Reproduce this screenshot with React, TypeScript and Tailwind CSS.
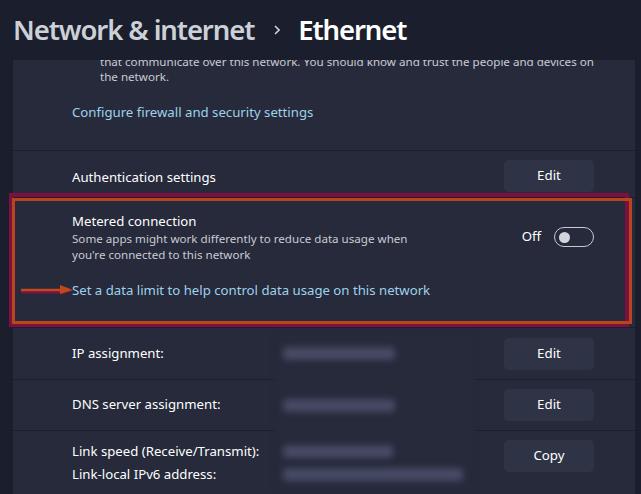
import React from "react";

const font = { fontFamily: '"Noto Sans", "Open Sans", sans-serif' };

function ActionButton({ label }: { label: string }) {
  return (
    <button className="w-[90px] h-[32px] rounded-[5px] bg-[#2f3346] text-[13.3px] text-white">
      {label}
    </button>
  );
}

function Blob({ w, className = "" }: { w: string; className?: string }) {
  return <div className={`h-[13px] rounded-sm bg-[#464a64] blur-[3px] ${w} ${className}`} />;
}

export default function App() {
  return (
    <div className="w-[641px] h-[494px] bg-[#1b1f2d] overflow-hidden relative" style={font}>
      {/* Header */}
      <div className="h-[60px] flex items-center pl-[13px] pb-[1px]">
        <span className="text-[27.5px] font-semibold text-[#cdd0d7] tracking-[-1.1px]">Network &amp; internet</span>
        <svg className="ml-[20px] mr-[18px]" width="6" height="10" viewBox="0 0 6 10">
          <path d="M1 1 L5 5 L1 9" fill="none" stroke="#cdd0d7" strokeWidth="1.6" />
        </svg>
        <span className="text-[27.5px] font-semibold text-white tracking-[-1.1px]">Ethernet</span>
      </div>

      {/* Card column */}
      <div className="ml-[13px] w-[622px] flex flex-col gap-[1px]">
        {/* Firewall section (scrolled) */}
        <div className="h-[90px] bg-[#262a3b] overflow-hidden">
          <div className="mt-[-6px] pl-[87px] text-[11.6px] leading-[15px] text-[#c9cbd3]">
            <div>that communicate over this network. You should know and trust the people and devices on</div>
            <div>the network.</div>
          </div>
          <div className="pl-[59px] mt-[19px] text-[13.2px] text-[#9fd2ea]">
            Configure firewall and security settings
          </div>
        </div>

        {/* Authentication */}
        <div className="h-[46px] bg-[#262a3b] flex items-center justify-between pl-[59px] pr-[41px] pt-[4px]">
          <span className="text-[13.2px] text-white mt-[3px]">Authentication settings</span>
          <ActionButton label="Edit" />
        </div>

        {/* Metered connection */}
        <div className="h-[129px] bg-[#262a3b] pl-[59px] pr-[41px] pt-[13px]">
          <div className="flex justify-between items-start">
            <div>
              <div className="text-[13.2px] text-white leading-[20px]">Metered connection</div>
              <div className="text-[11.6px] leading-[16px] text-[#c9cbd3] w-[345px]">
                Some apps might work differently to reduce data usage when you're connected to this network
              </div>
            </div>
            <div className="flex items-center gap-[13px] mt-[16px]">
              <span className="text-[13.2px] text-white">Off</span>
              <div className="w-[40px] h-[20px] rounded-full border border-[#c8cad2] flex items-center pl-[4px]">
                <div className="w-[11px] h-[11px] rounded-full bg-[#d3d5dc]" />
              </div>
            </div>
          </div>
          <div className="mt-[18px] text-[13.2px] text-[#9fd2ea]">
            Set a data limit to help control data usage on this network
          </div>
        </div>

        {/* IP assignment */}
        <div className="h-[51px] bg-[#262a3b] flex items-center justify-between pl-[59px] pr-[41px]">
          <span className="text-[13.2px] text-white">IP assignment:</span>
          <ActionButton label="Edit" />
        </div>

        {/* DNS */}
        <div className="h-[50px] bg-[#262a3b] flex items-center justify-between pl-[59px] pr-[41px]">
          <span className="text-[13.2px] text-white">DNS server assignment:</span>
          <ActionButton label="Edit" />
        </div>

        {/* Link speed */}
        <div className="h-[70px] bg-[#262a3b] flex justify-between pl-[59px] pr-[41px] pt-[9px]">
          <div className="text-[13.2px] text-white leading-[23px]">
            <div>Link speed (Receive/Transmit):</div>
            <div>Link-local IPv6 address:</div>
          </div>
          <ActionButton label="Copy" />
        </div>
      </div>

      {/* Redacted values */}
      <div className="absolute left-[274px] top-[330px] w-[202px] h-[164px] bg-[#262a3b] blur-[2px]" />
      <div className="absolute left-[283px] top-[347px] flex flex-col">
        <Blob w="w-[112px]" />
        <Blob w="w-[112px]" className="mt-[39px]" />
        <Blob w="w-[110px]" className="mt-[33px]" />
        <Blob w="w-[180px]" className="mt-[10px]" />
      </div>

      {/* Annotation box */}
      <div className="absolute left-[9px] top-[193px] w-[620px] h-[134px] border-[4px] border-[#7d1040]" />
      <div className="absolute left-[12px] top-[198px] w-[620px] h-[126px] border-[3px] border-[#b8461c]" />

      {/* Arrow */}
      <svg className="absolute left-[18px] top-[282px]" width="58" height="16" viewBox="0 0 58 16">
        <line x1="3" y1="10" x2="46" y2="10" stroke="#7d1040" strokeWidth="3" />
        <polygon points="42,5 55,9 42,13" fill="#7d1040" />
        <line x1="3" y1="8" x2="46" y2="8" stroke="#c0481c" strokeWidth="2.5" />
        <polygon points="42,3 55,8 42,12" fill="#c0481c" />
      </svg>
    </div>
  );
}
